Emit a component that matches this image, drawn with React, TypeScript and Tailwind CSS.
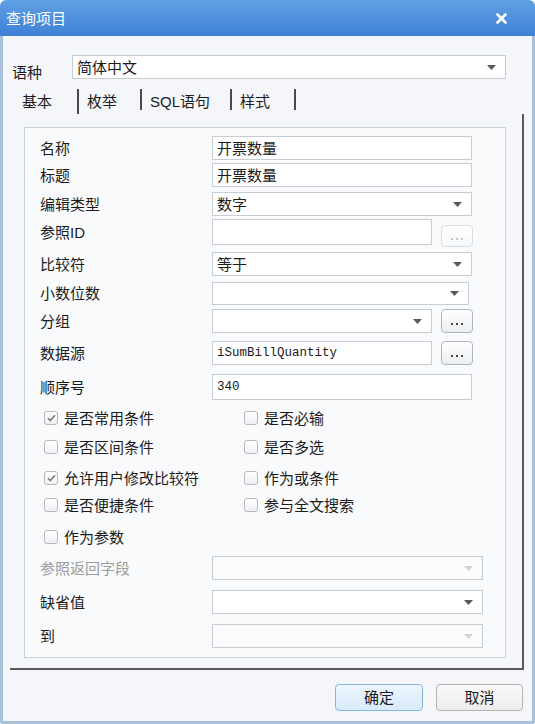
import type { ReactNode } from "react";

const Arrow = ({ disabled }: { disabled?: boolean }) => (
  <svg width="9" height="5" viewBox="0 0 9 5" className="shrink-0">
    <path d="M0 0h9L4.5 5z" fill={disabled ? "#d0d4d9" : "#5a5a5a"} />
  </svg>
);

function Field({ w, text, mono }: { w: string; text?: string; mono?: boolean }) {
  return (
    <div className={`${w} h-full border border-[#c6ccd4] bg-white flex items-center px-[4px]`}>
      <span className={mono ? "font-['Liberation_Mono',monospace] text-[12.5px]" : ""}>{text}</span>
    </div>
  );
}

function Select({ w, text, disabled }: { w: string; text?: string; disabled?: boolean }) {
  return (
    <div
      className={`${w} h-full border border-[#c6ccd4] flex items-center justify-between pl-[4px] pr-[9px] ${
        disabled ? "bg-[#fbfbfc]" : "bg-white"
      }`}
    >
      <span>{text}</span>
      <Arrow disabled={disabled} />
    </div>
  );
}

function Dots({ disabled, h }: { disabled?: boolean; h: string }) {
  const dot = disabled ? "bg-[#c4c8cc]" : "bg-[#444]";
  return (
    <div
      className={`w-[32px] ${h} rounded-[4px] border bg-gradient-to-b flex items-center justify-center gap-[3px] pt-[5px] ${
        disabled ? "border-[#d8dde3] from-white to-[#f6f7f8]" : "border-[#aeb5be] from-white to-[#eceef0]"
      }`}
    >
      <span className={`w-[2px] h-[2px] ${dot}`} />
      <span className={`w-[2px] h-[2px] ${dot}`} />
      <span className={`w-[2px] h-[2px] ${dot}`} />
    </div>
  );
}

function Row({ mt, h, label, grey, children }: { mt: string; h: string; label: string; grey?: boolean; children: ReactNode }) {
  return (
    <div className={`flex ${mt} ${h} pl-[15px]`}>
      <div className={`w-[172px] flex items-center ${grey ? "text-[#9c9c9c]" : ""}`}>{label}</div>
      <div className="flex items-start gap-[9px] h-full">{children}</div>
    </div>
  );
}

function Check({ label, checked }: { label: string; checked?: boolean }) {
  return (
    <div className="flex items-center gap-[6px] w-[200px]">
      <div className="w-[14px] h-[14px] rounded-[3px] border border-[#b5b9be] bg-gradient-to-b from-white to-[#eef0f2] flex items-center justify-center">
        {checked && (
          <svg width="9" height="8" viewBox="0 0 9 8">
            <path d="M1 4.2l2.3 2.3L8 1.2" fill="none" stroke="#7a7a7a" strokeWidth="1.6" />
          </svg>
        )}
      </div>
      <span>{label}</span>
    </div>
  );
}

function CheckRow({ mt, children }: { mt: string; children: ReactNode }) {
  return <div className={`flex ${mt} h-[20px] pl-[19px]`}>{children}</div>;
}

function Tab({ w, pl, label }: { w: string; pl: string; label: string }) {
  return (
    <div className={`${w} ${pl} flex items-center h-[25px]`}>
      <span className="text-[15px]">{label}</span>
    </div>
  );
}

const Sep = ({ h }: { h: string }) => <div className={`w-[2px] ${h} bg-[#4a4a4a] self-start`} />;

export default function App() {
  return (
    <div className="w-[535px] h-[724px] flex flex-col bg-white text-[15px] text-[#1b1b1b] leading-none font-['Liberation_Sans','Noto_Sans_CJK_SC',sans-serif]">
      <div className="h-[36px] shrink-0 rounded-t-[6px] bg-gradient-to-b from-[#5fa0e4] to-[#3e80d5] flex items-center justify-between pl-[6px] pr-[28px]">
        <span className="text-white text-[15px]">查询项目</span>
        <svg width="11" height="11" viewBox="0 0 11 11">
          <path d="M1.5 1.5l8 8M9.5 1.5l-8 8" stroke="white" strokeWidth="2.6" strokeLinecap="round" />
        </svg>
      </div>

      <div className="flex-1 flex flex-col bg-[#f4f6fa] border-x-[3px] border-b-[3px] border-[#a9c0dc] rounded-b-[3px]">
        <div className="flex items-start mt-[19px] pl-[9px]">
          <span className="w-[60px] mt-[8px] leading-[20px]">语种</span>
          <div className="h-[24px]">
            <Select w="w-[434px]" text="简体中文" />
          </div>
        </div>

        <div className="flex mt-[6px] pl-[19px] h-[25px]">
          <Tab w="w-[55px]" pl="pl-[0px]" label="基本" />
          <Sep h="h-[25px]" />
          <Tab w="w-[61px]" pl="pl-[8px]" label="枚举" />
          <Sep h="h-[21px]" />
          <Tab w="w-[88px]" pl="pl-[8px]" label="SQL语句" />
          <Sep h="h-[21px]" />
          <Tab w="w-[62px]" pl="pl-[8px]" label="样式" />
          <Sep h="h-[21px]" />
        </div>

        <div className="ml-[7px] w-[514px] flex flex-col border-r-2 border-b-2 border-[#5a5a5a]">
          <div className="ml-[14px] mt-[13px] mb-[10px] w-[482px] h-[531px] border border-[#c8d0da] bg-[#f9fafc] flex flex-col">
            <Row mt="mt-[8px]" h="h-[24px]" label="名称">
              <Field w="w-[260px]" text="开票数量" />
            </Row>
            <Row mt="mt-[3px]" h="h-[24px]" label="标题">
              <Field w="w-[260px]" text="开票数量" />
            </Row>
            <Row mt="mt-[5px]" h="h-[24px]" label="编辑类型">
              <Select w="w-[260px]" text="数字" />
            </Row>
            <Row mt="mt-[3px]" h="h-[26px]" label="参照ID">
              <Field w="w-[220px]" />
              <div className="mt-[6px]">
                <Dots disabled h="h-[22px]" />
              </div>
            </Row>
            <Row mt="mt-[7px]" h="h-[24px]" label="比较符">
              <Select w="w-[260px]" text="等于" />
            </Row>
            <Row mt="mt-[6px]" h="h-[23px]" label="小数位数">
              <Select w="w-[257px]" />
            </Row>
            <Row mt="mt-[4px]" h="h-[24px]" label="分组">
              <Select w="w-[220px]" />
              <Dots h="h-[24px]" />
            </Row>
            <Row mt="mt-[8px]" h="h-[24px]" label="数据源">
              <Field w="w-[220px]" text="iSumBillQuantity" mono />
              <Dots h="h-[24px]" />
            </Row>
            <Row mt="mt-[9px]" h="h-[26px]" label="顺序号">
              <Field w="w-[260px]" text="340" mono />
            </Row>

            <CheckRow mt="mt-[8px]">
              <Check label="是否常用条件" checked />
              <Check label="是否必输" />
            </CheckRow>
            <CheckRow mt="mt-[9px]">
              <Check label="是否区间条件" />
              <Check label="是否多选" />
            </CheckRow>
            <CheckRow mt="mt-[11px]">
              <Check label="允许用户修改比较符" checked />
              <Check label="作为或条件" />
            </CheckRow>
            <CheckRow mt="mt-[7px]">
              <Check label="是否便捷条件" />
              <Check label="参与全文搜索" />
            </CheckRow>
            <CheckRow mt="mt-[12px]">
              <Check label="作为参数" />
            </CheckRow>

            <Row mt="mt-[9px]" h="h-[24px]" label="参照返回字段" grey>
              <Select w="w-[271px]" disabled />
            </Row>
            <Row mt="mt-[10px]" h="h-[24px]" label="缺省值">
              <Select w="w-[271px]" />
            </Row>
            <Row mt="mt-[10px]" h="h-[24px]" label="到">
              <Select w="w-[271px]" disabled />
            </Row>
          </div>
        </div>

        <div className="flex justify-end gap-[13px] mt-[14px] pr-[9px]">
          <button className="w-[88px] h-[27px] rounded-[4px] border border-[#86b6e6] bg-gradient-to-b from-[#edf5fd] to-[#d8eafa] flex items-center justify-center">
            确定
          </button>
          <button className="w-[87px] h-[27px] rounded-[4px] border border-[#b3b3b3] bg-gradient-to-b from-[#fafafa] to-[#ececec] flex items-center justify-center">
            取消
          </button>
        </div>
      </div>
    </div>
  );
}
